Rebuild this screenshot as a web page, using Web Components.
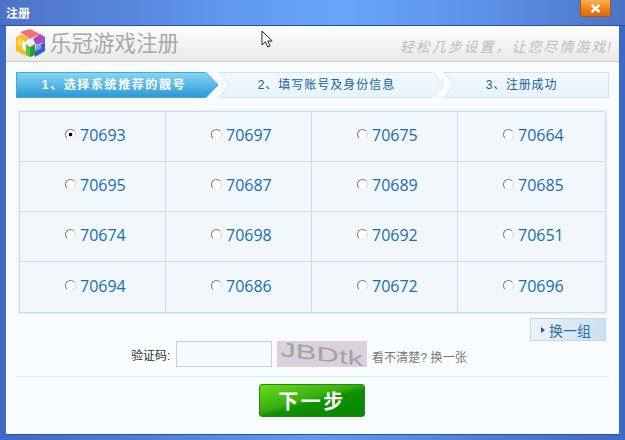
<!DOCTYPE html>
<html lang="zh-CN">
  <head>
    <meta charset="UTF-8" />
    <title>注册</title>
    <style>
      html, body { margin: 0; height: 100%; background: #3f6fc8; }
      body { font-family: "Liberation Sans", "Noto Sans CJK SC", sans-serif; font-size: 12px; }
    </style>
  </head>
  <body>
    <game-window>
      <reg-header></reg-header>
      <reg-steps>
        <step-item width="203" kind="first" active>1、选择系统推荐的靓号</step-item>
        <step-item width="227" kind="mid">2、填写账号及身份信息</step-item>
        <step-item width="166" kind="last">3、注册成功</step-item>
      </reg-steps>
      <number-grid numbers="70693 70697 70675 70664 70695 70687 70689 70685 70674 70698 70692 70651 70694 70686 70672 70696"></number-grid>
      <captcha-row></captcha-row>
      <next-button>下一步</next-button>
    </game-window>
    <script>
      class GameWindow extends HTMLElement {
        constructor() {
          super();
          this.attachShadow({ mode: "open" });
          this.shadowRoot.innerHTML = `
            <style>
              :host { display: flex; flex-direction: column; position: relative; width: 625px; height: 440px; box-sizing: border-box;
                background: linear-gradient(90deg, #3d69c4 0, #5f9bf0 50%, #3d69c4 100%); overflow: hidden; }
              .title { display: flex; justify-content: space-between; height: 25px; flex: none; padding: 0 14px 0 6px;
                background: linear-gradient(90deg, #4b72c6 0, #5f97ee 35%, #68a6fb 55%, #5a8fe4 80%, #4a75c6 100%);
                border-bottom: 1px solid #2a4f9c; color: #fff; font-weight: bold; font-size: 12px; line-height: 28px; }
              .close { width: 31px; height: 17px; box-sizing: border-box; border: 1px solid #a35a10; border-top: 0; border-radius: 0 0 2px 2px;
                background: linear-gradient(#fdb24d, #ee7e12 60%, #d96a0a); display: flex; align-items: center; justify-content: center; }
              .body { flex: 1; margin: 0 6px 6px; background: #f9fcff; display: flex; flex-direction: column;
                box-shadow: 0 1px 0 #2a4f9c; }
              .cursor { position: absolute; left: 261px; top: 30px; }
            </style>
            <div class="title">
              <span>注册</span>
              <span class="close">
                <svg width="11" height="9" viewBox="0 0 11 9"><path d="M1.5 1 9.5 8M9.5 1 1.5 8" stroke="#fff" stroke-width="2.4"/></svg>
              </span>
            </div>
            <div class="body"><slot></slot></div>
            <svg class="cursor" width="13" height="20" viewBox="0 0 13 20">
              <path d="M1 1v14l3.4-3.2 2.3 5.2 2.4-1-2.3-5h4.4z" fill="#fff" stroke="#222" stroke-width="1"/>
            </svg>`;
        }
      }

      class RegHeader extends HTMLElement {
        constructor() {
          super();
          this.attachShadow({ mode: "open" });
          this.shadowRoot.innerHTML = `
            <style>
              :host { display: flex; align-items: center; height: 35px; padding: 0 6px 0 10px;
                background: linear-gradient(#fefefe, #e9e9e9); border-bottom: 1px solid #c9c9c9; }
              svg { flex: none; margin-right: 5px; }
              .name { font-size: 21.5px; color: #a8a8a8; line-height: 36px; }
              .slogan { margin-left: auto; font-size: 14px; letter-spacing: 1.95px; color: #bcbcbc; font-style: italic; padding-top: 4px; }
            </style>
            <svg width="29" height="29" viewBox="0 0 29 29">
              <polygon points="4,3 14,0 24,5 14,10" fill="#ee7078"/>
              <polygon points="0,8 6,5 13,10 9,13 6,11 6,20 11,23 11,27 0,22" fill="#f9bf1e"/>
              <polygon points="2,10 5,9 5,17 2,16" fill="#fbe27a" opacity=".8"/>
              <polygon points="17,10 24,5 29,8 29,13 20,16" fill="#a44cc4"/>
              <polygon points="29,13 29,22 19,28 19,22 25,19 25,15" fill="#2f62c8"/>
              <polygon points="20,16 25,15 25,19 19,22" fill="#7fa3e6"/>
              <polygon points="10,15 14,18 14,28 10,26" fill="#5cc33c"/>
              <polygon points="14,18 19,15 19,26 14,28" fill="#2f9a2a"/>
              <circle cx="14.500" cy="13.500" r="3" fill="#f2eef8"/>
            </svg>
            <span class="name">乐冠游戏注册</span>
            <span class="slogan">轻松几步设置，让您尽情游戏!</span>`;
        }
      }

      class RegSteps extends HTMLElement {
        constructor() {
          super();
          this.attachShadow({ mode: "open" });
          this.shadowRoot.innerHTML = `
            <style>
              :host { display: flex; margin: 10px 10px 0; height: 26px; }
              ::slotted(step-item:not(:first-child)) { margin-left: -1px; }
              ::slotted(step-item:last-child) { margin-left: -2px; }
            </style>
            <slot></slot>`;
        }
      }

      class StepItem extends HTMLElement {
        connectedCallback() {
          if (this.shadowRoot) return;
          const w = Number(this.getAttribute("width"));
          const kind = this.getAttribute("kind");
          const active = this.hasAttribute("active");
          const h = 26;
          const right = kind === "last" ? `${w - 0.5},0.5 ${w - 0.5},${h - 0.5}` : `${w - 13},0.5 ${w - 1},${h / 2} ${w - 13},${h - 0.5}`;
          const left = kind === "first" ? `0.5,${h - 0.5} 0.5,0.5` : `1,${h - 0.5} 12,${h / 2} 1,0.5`;
          const inset = { first: 7, mid: 10, last: 9 }[kind];
          const spacing = { first: 1.6, mid: 1, last: 0.8 }[kind];
          this.attachShadow({ mode: "open" });
          this.shadowRoot.innerHTML = `
            <style>
              :host { display: block; position: relative; width: ${w}px; height: ${h}px; flex: none; }
              svg { position: absolute; inset: 0; }
              .label { position: relative; display: block; text-align: center; line-height: ${h}px; white-space: nowrap;
                padding-right: ${inset}px;
                color: ${active ? "#fff" : "#16629c"}; font-weight: ${active ? "bold" : "normal"};
                font-size: 12px; letter-spacing: ${spacing}px; }
            </style>
            <svg width="${w}" height="${h}">
              <defs><linearGradient id="g" x1="0" y1="0" x2="0" y2="1">
                ${active ? '<stop offset="0" stop-color="#86d8f5"/><stop offset="1" stop-color="#2a97d4"/>' : '<stop offset="0" stop-color="#f3f9ff"/><stop offset="1" stop-color="#e8f3fd"/>'}
              </linearGradient></defs>
              <polygon points="${left} ${right}" fill="url(#g)" stroke="${active ? "#3fa9e0" : "#cfe2fa"}"/>
            </svg>
            <span class="label"><slot></slot></span>`;
        }
      }

      class NumberGrid extends HTMLElement {
        connectedCallback() {
          if (this.shadowRoot) return;
          const numbers = this.getAttribute("numbers").split(" ");
          this.attachShadow({ mode: "open" });
          this.shadowRoot.innerHTML = `
            <style>
              :host { display: grid; grid-template-columns: 146px 146px 146px 147px; grid-auto-rows: 50px; margin: 13px 13px 0;
                border: 1px solid #cbdcea; background: #f2f7fb; box-shadow: -1px -1px 2px #e9edf1, 1px 1px 2px #e4e9ee; }
              label { display: flex; align-items: center; gap: 4px; padding: 0 0 3px 45px; color: #156eb0; font-size: 16px;
                font-family: "Open Sans", sans-serif; border-right: 1px solid #cbdcea; border-bottom: 1px solid #cbdcea; }
              label:nth-of-type(4n) { border-right: 0; }
              label:nth-last-of-type(-n+4) { border-bottom: 0; }
              input { appearance: none; margin: -1px 0 0; width: 11px; height: 11px; border-radius: 50%; box-sizing: border-box; flex: none;
                background: #fff; border: 1px solid; border-color: #7d7d7d #d8d8d8 #eeeeee #7d7d7d; }
              input:checked { background: radial-gradient(circle, #000 0 1.5px, #fff 2.2px); }
            </style>
            ${numbers.map((n, i) => `<label><input type="radio" name="num"${i === 0 ? " checked" : ""}>${n}</label>`).join("")}`;
        }
      }

      class CaptchaRow extends HTMLElement {
        constructor() {
          super();
          this.attachShadow({ mode: "open" });
          this.shadowRoot.innerHTML = `
            <style>
              :host { display: block; border-bottom: 1px solid #dfe9f2; margin: 0 10px; height: 64px; box-sizing: border-box; }
              .swap { display: flex; align-items: center; justify-content: center; gap: 4px; margin: 5px 3px 0 auto; width: 76px; height: 23px; box-sizing: border-box; padding-right: 4px;
                border: 1px solid #c3d8ea; background: linear-gradient(100deg, #edf4fa, #c9e0f0); color: #2a6ea5; font-size: 14px; }
              .swap i { width: 0; height: 0; border-left: 4px solid #1c5f96; border-top: 3px solid transparent; border-bottom: 3px solid transparent; }
              .row { display: flex; align-items: flex-end; height: 26px; margin-left: 115px; }
              .label { color: #333; width: 45px; padding-bottom: 4px; }
              input { width: 96px; height: 26px; box-sizing: border-box; border: 1px solid #c3d3dd; background: #f5fafe; margin: 0 5px 0 0; padding: 0; }
              .code { width: 90px; height: 26px; background: #dccfe0; color: #99a899; margin-right: 5px; display: flex; align-items: center; justify-content: center; }
              .code span { font: 20px/24px "Liberation Sans", sans-serif; transform: skewY(7deg) scaleX(1.55); }
              .hint { color: #777; padding-bottom: 2px; letter-spacing: .1px; }
            </style>
            <div class="swap"><i></i>换一组</div>
            <div class="row">
              <span class="label">验证码:</span>
              <input type="text">
              <div class="code"><span>JBDtk</span></div>
              <span class="hint">看不清楚? 换一张</span>
            </div>`;
        }
      }

      class NextButton extends HTMLElement {
        constructor() {
          super();
          this.attachShadow({ mode: "open" });
          this.shadowRoot.innerHTML = `
            <style>
              :host { display: flex; align-items: center; justify-content: center; width: 106px; height: 33px; margin: 7px auto 0; box-sizing: border-box;
                position: relative; left: -.5px; border-radius: 3px; border: 1px solid #1d8a10; color: #fff; font-weight: bold; font-size: 20px; letter-spacing: 2.5px;
                background: linear-gradient(165deg, #6bdc1e 0, #37ad0e 45%, #0f8f02 55%, #078700 100%); }
            </style>
            <slot></slot>`;
        }
      }

      customElements.define("game-window", GameWindow);
      customElements.define("reg-header", RegHeader);
      customElements.define("reg-steps", RegSteps);
      customElements.define("step-item", StepItem);
      customElements.define("number-grid", NumberGrid);
      customElements.define("captcha-row", CaptchaRow);
      customElements.define("next-button", NextButton);
    </script>
  </body>
</html>
